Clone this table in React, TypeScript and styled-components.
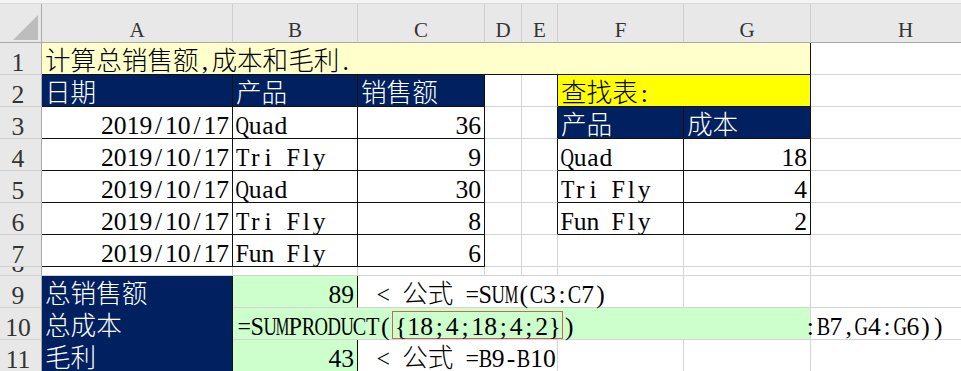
import React from "react";
import styled, { createGlobalStyle } from "styled-components";

const GRID = "#D4D4D4";
const INK = "#111111";
const NAVY = "#002060";
const CREAM = "#FFFFCC";
const YELLOW = "#FFFF00";
const MINT = "#CCFFCC";
const HEAD_BG = "#E8E8E8";
const HEAD_LINE = "#A9A9A9";
const HEAD_SEP = "#CFCFCF";
const ARRAY_BOX = "#C4675A";

const Global = createGlobalStyle`
  html, body { margin: 0; padding: 0; background: #fff; }
  body { overflow: hidden; }
`;

const Page = styled.div`
  width: 961px;
  height: 371px;
  overflow: hidden;
  background: #fff;
  font-family: "Liberation Serif", "Noto Sans CJK SC", serif;
  font-size: 25.6px;
  font-weight: 300;
  color: #000;
`;

const TopEdge = styled.div`
  width: 1001px;
  height: 3px;
  background: #f4f4f4;
  border-bottom: 1px solid #dadada;
`;

const Sheet = styled.div`
  display: grid;
  grid-template-columns: 42px 191px 125px 127px 37px 36px 126px 127px 190px;
  grid-template-rows: 39px repeat(7, 32px) 9px repeat(3, 32px);
  width: 1001px;
`;

const Corner = styled.div`
  box-sizing: border-box;
  background: ${HEAD_BG};
  border-right: 1px solid ${HEAD_LINE};
  border-bottom: 1px solid ${HEAD_LINE};
  display: flex;
  align-items: flex-end;
  justify-content: flex-end;
  padding: 0 3px 2px 0;
`;

const ColHead = styled.div`
  box-sizing: border-box;
  background: ${HEAD_BG};
  border-right: 1px solid ${HEAD_SEP};
  border-bottom: 1px solid ${HEAD_LINE};
  display: flex;
  align-items: flex-end;
  justify-content: center;
  padding-bottom: 4px;
  font-size: 21px;
  line-height: 16px;
  color: #333;
`;

const RowHead = styled.div`
  box-sizing: border-box;
  background: ${HEAD_BG};
  border-right: 1px solid ${HEAD_LINE};
  border-bottom: 1px solid ${HEAD_SEP};
  display: flex;
  align-items: flex-end;
  justify-content: center;
  padding: 0 5px 1px 0;
  line-height: 20px;
  color: #333;
`;

/* a row squeezed to a few pixels shows only the bottom of its number */
const ShortRowHead = styled(RowHead)`
  overflow: hidden;
`;

type CellProps = {
  $bg?: string;
  $fg?: string;
  $r?: string;
  $b?: string;
  $span?: number;
  $right?: boolean;
};

const Cell = styled.div<CellProps>`
  box-sizing: border-box;
  min-width: 0;
  grid-column: span ${(p) => p.$span ?? 1};
  background: ${(p) => p.$bg ?? "#fff"};
  color: ${(p) => p.$fg ?? "#000"};
  border-right: 1px solid ${(p) => p.$r ?? GRID};
  border-bottom: 1px solid ${(p) => p.$b ?? GRID};
  display: flex;
  align-items: flex-end;
  justify-content: ${(p) => (p.$right ? "flex-end" : "flex-start")};
  padding: 0 3px 2px 3px;
  white-space: nowrap;
`;

const ShortCell = styled(Cell)`
  overflow: hidden;
`;

const Line = styled.span<{ $indent?: number }>`
  display: block;
  line-height: 20px;
  white-space: nowrap;
  text-indent: ${(p) => p.$indent ?? 0}px;
`;

/* Latin characters sit in half-width slots, like a CJK system font */
const Half = styled.span`
  display: inline-flex;
  justify-content: center;
  width: 0.5em;
  text-indent: 0;
`;

const Ink = styled.span<{ $sx: number }>`
  display: inline-block;
  transform: scaleX(${(p) => p.$sx});
`;

const ArrayBox = styled.span`
  display: inline-block;
  border: 1px solid ${ARRAY_BOX};
  padding: 5px 1px 1px 0;
  margin-bottom: -2px;
`;

// advance widths (em) of the serif face for the half-width characters in use
const SERIF_EM: Record<string, number> = {
  " ": 0.25, "(": 0.333, ")": 0.333, ",": 0.25, "-": 0.333, ".": 0.25, "/": 0.278,
  ":": 0.278, ";": 0.278, "<": 0.564, "=": 0.564, "{": 0.48, "}": 0.48,
  A: 0.722, B: 0.667, C: 0.667, D: 0.722, E: 0.611, F: 0.556, G: 0.722, H: 0.722,
  I: 0.333, L: 0.611, M: 0.889, N: 0.722, O: 0.722, P: 0.556, Q: 0.722, R: 0.667,
  S: 0.556, T: 0.611, U: 0.722,
  a: 0.444, d: 0.5, i: 0.278, l: 0.278, n: 0.5, r: 0.333, u: 0.5, y: 0.5,
};

const squeeze = (ch: string) => {
  const w = SERIF_EM[ch] ?? 0.5;
  return w > 0.5 ? Math.min(1, +((0.5 / w) * 1.05).toFixed(3)) : 1;
};

function Txt({ s }: { s: string }) {
  const parts: React.ReactNode[] = [];
  let wide = "";
  Array.from(s).forEach((ch, i) => {
    if (ch.charCodeAt(0) < 0x2000) {
      if (wide) {
        parts.push(<React.Fragment key={`w${i}`}>{wide}</React.Fragment>);
        wide = "";
      }
      parts.push(
        <Half key={i}>
          <Ink $sx={squeeze(ch)}>{ch === " " ? "\u00a0" : ch}</Ink>
        </Half>
      );
    } else {
      wide += ch;
    }
  });
  if (wide) parts.push(<React.Fragment key="wend">{wide}</React.Fragment>);
  return <>{parts}</>;
}

const sales = [
  { date: "2019/10/17", product: "Quad", amount: 36 },
  { date: "2019/10/17", product: "Tri Fly", amount: 9 },
  { date: "2019/10/17", product: "Quad", amount: 30 },
  { date: "2019/10/17", product: "Tri Fly", amount: 8 },
  { date: "2019/10/17", product: "Fun Fly", amount: 6 },
];

const costs = [
  { product: "Quad", cost: 18 },
  { product: "Tri Fly", cost: 4 },
  { product: "Fun Fly", cost: 2 },
];

const columns = ["A", "B", "C", "D", "E", "F", "G", "H"];

function Lookup({ i }: { i: number }) {
  if (i === 0) {
    return (
      <>
        <Cell $bg={NAVY} $fg="#fff" $r={INK} $b={INK}>
          <Line><Txt s="产品" /></Line>
        </Cell>
        <Cell $bg={NAVY} $fg="#fff" $r={INK} $b={INK}>
          <Line><Txt s="成本" /></Line>
        </Cell>
      </>
    );
  }
  const row = costs[i - 1];
  if (!row) {
    return (
      <>
        <Cell />
        <Cell />
      </>
    );
  }
  return (
    <>
      <Cell $r={INK} $b={INK}>
        <Line><Txt s={row.product} /></Line>
      </Cell>
      <Cell $r={INK} $b={INK} $right>
        <Line><Txt s={String(row.cost)} /></Line>
      </Cell>
    </>
  );
}

export default function App() {
  return (
    <Page>
      <Global />
      <TopEdge />
      <Sheet>
        <Corner>
          <svg width="25" height="25" viewBox="0 0 25 25">
            <polygon points="25,0 25,25 0,25" fill="#BDBDBD" />
          </svg>
        </Corner>
        {columns.map((c) => (
          <ColHead key={c}>{c}</ColHead>
        ))}

        {/* row 1: title */}
        <RowHead>1</RowHead>
        <Cell $span={7} $bg={CREAM} $r={INK} $b={INK}>
          <Line><Txt s="计算总销售额,成本和毛利." /></Line>
        </Cell>
        <Cell />

        {/* row 2: table headers */}
        <RowHead>2</RowHead>
        <Cell $bg={NAVY} $fg="#fff" $r={INK} $b={INK}>
          <Line><Txt s="日期" /></Line>
        </Cell>
        <Cell $bg={NAVY} $fg="#fff" $r={INK} $b={INK}>
          <Line><Txt s="产品" /></Line>
        </Cell>
        <Cell $bg={NAVY} $fg="#fff" $r={INK} $b={INK}>
          <Line><Txt s="销售额" /></Line>
        </Cell>
        <Cell />
        <Cell $r={INK} />
        <Cell $span={2} $bg={YELLOW} $r={INK} $b={INK}>
          <Line><Txt s="查找表:" /></Line>
        </Cell>
        <Cell />

        {/* rows 3-7: sales and the lookup table */}
        {sales.map((s, i) => (
          <React.Fragment key={i}>
            <RowHead>{i + 3}</RowHead>
            <Cell $r={INK} $b={INK} $right>
              <Line><Txt s={s.date} /></Line>
            </Cell>
            <Cell $r={INK} $b={INK}>
              <Line><Txt s={s.product} /></Line>
            </Cell>
            <Cell $r={INK} $b={INK} $right>
              <Line><Txt s={String(s.amount)} /></Line>
            </Cell>
            <Cell />
            <Cell $r={i < 4 ? INK : GRID} />
            <Lookup i={i} />
            <Cell />
          </React.Fragment>
        ))}

        {/* row 8: collapsed */}
        <ShortRowHead>8</ShortRowHead>
        {columns.map((c) => (
          <ShortCell key={c} />
        ))}

        {/* row 9 */}
        <RowHead>9</RowHead>
        <Cell $bg={NAVY} $fg="#fff" $r={INK} $b={NAVY}>
          <Line><Txt s="总销售额" /></Line>
        </Cell>
        <Cell $bg={MINT} $r={INK} $right>
          <Line><Txt s="89" /></Line>
        </Cell>
        <Cell $span={4}>
          <Line $indent={15.6}><Txt s="< 公式 =SUM(C3:C7)" /></Line>
        </Cell>
        <Cell />
        <Cell />

        {/* row 10 */}
        <RowHead>10</RowHead>
        <Cell $bg={NAVY} $fg="#fff" $r={INK} $b={NAVY}>
          <Line><Txt s="总成本" /></Line>
        </Cell>
        <Cell $span={6} $bg={MINT}>
          <Line $indent={2}>
            <Txt s="=SUMPRODUCT(" />
            <ArrayBox><Txt s="{18;4;18;4;2}" /></ArrayBox>
            <Txt s=")" />
          </Line>
        </Cell>
        <Cell>
          <Line $indent={-10}><Txt s=":B7,G4:G6))" /></Line>
        </Cell>

        {/* row 11 */}
        <RowHead>11</RowHead>
        <Cell $bg={NAVY} $fg="#fff" $r={INK} $b={NAVY}>
          <Line><Txt s="毛利" /></Line>
        </Cell>
        <Cell $bg={MINT} $r={INK} $right>
          <Line><Txt s="43" /></Line>
        </Cell>
        <Cell $span={3}>
          <Line $indent={15.6}><Txt s="< 公式 =B9-B10" /></Line>
        </Cell>
        <Cell />
        <Cell />
        <Cell />
      </Sheet>
    </Page>
  );
}
